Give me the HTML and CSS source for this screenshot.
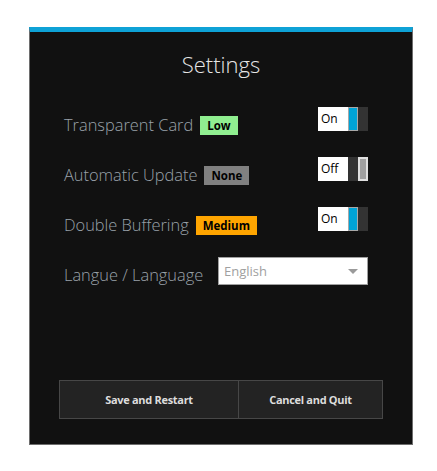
FILE: index.html
```html
<!DOCTYPE html>
<html>
<head>
<meta charset="utf-8">
<link rel="stylesheet" href="styles.css">
</head>
<body>
<div class="card">
  <h1 class="title">Settings</h1>
  <div class="settings">
    <div class="row">
      <div class="label">Transparent Card <span class="badge low">Low</span></div>
      <div class="toggle on"><span class="state">On</span><span class="thumb"></span><span class="rest"></span></div>
    </div>
    <div class="row">
      <div class="label">Automatic Update <span class="badge none">None</span></div>
      <div class="toggle off"><span class="state">Off</span><span class="rest"></span><span class="thumb"></span></div>
    </div>
    <div class="row">
      <div class="label">Double Buffering <span class="badge medium">Medium</span></div>
      <div class="toggle on"><span class="state">On</span><span class="thumb"></span><span class="rest"></span></div>
    </div>
    <div class="row">
      <div class="label">Langue / Language</div>
      <div class="combo"><span class="combo-text">English</span><svg class="arrow" width="10" height="5" viewBox="0 0 10 5"><path d="M0 0H10L5 5Z" fill="#9a9a9a"/></svg></div>
    </div>
  </div>
  <div class="actions">
    <button class="btn">Save and Restart</button>
    <button class="btn second">Cancel and Quit</button>
  </div>
</div>
</body>
</html>
```
FILE: styles.css
```css
body {
  margin: 0;
  background: #ffffff;
}
.card {
  box-sizing: border-box;
  width: 384px;
  height: 418px;
  margin: 27px 0 0 29px;
  background: #111111;
  border: 1px solid #6e6e6e;
  border-top: 5px solid #0ea2d6;
  display: flex;
  flex-direction: column;
  font-family: "Open Sans", "Noto Sans", sans-serif;
}
.title {
  margin: 16px 0 0;
  font-weight: 300;
  font-size: 22px;
  line-height: 32px;
  text-align: center;
  color: #e6e6e6;
}
.settings {
  margin-top: 20px;
  padding: 0 44px 0 34px;
}
.row {
  height: 50px;
  display: flex;
  justify-content: space-between;
  align-items: flex-start;
}
.label {
  margin-top: 14px;
  font-size: 16.4px;
  line-height: 22px;
  font-weight: 300;
  color: #9aa2aa;
  display: flex;
  align-items: center;
  gap: 7px;
  white-space: nowrap;
}
.badge {
  height: 19px;
  line-height: 19px;
  padding: 0 7px;
  font-size: 11.5px;
  font-weight: 700;
  color: #000;
}
.low { background: #90ee90; }
.none { background: #808080; }
.medium { background: #ffa500; }
.toggle {
  margin-top: 7px;
  display: flex;
  width: 50px;
  height: 24px;
}
.state {
  box-sizing: border-box;
  width: 30px;
  background: #ffffff;
  color: #000;
  font-size: 12px;
  line-height: 24px;
  padding-left: 3px;
}
.thumb {
  box-sizing: border-box;
  width: 10px;
  border: 1px solid #a8a8a8;
  background: #00a3d6;
}
.rest {
  width: 10px;
  background: #333333;
}
.off .thumb {
  background: #a0a0a0;
  border: 2px solid #e0e0e0;
}
.combo {
  margin-top: 7px;
  box-sizing: border-box;
  width: 150px;
  height: 28px;
  flex: none;
  background: #ffffff;
  border: 1px solid #a0a0a0;
  display: flex;
  align-items: center;
  justify-content: space-between;
  padding: 0 9px 0 5px;
  color: #a0a0a0;
  font-size: 13px;
}
.actions {
  margin-top: auto;
  margin-bottom: 25px;
  padding-left: 29px;
  display: grid;
  grid-template-columns: 180px 144px;
  height: 39px;
}
.btn {
  box-sizing: border-box;
  background: #232323;
  border: 1px solid #474747;
  color: #dddddd;
  font-family: "Open Sans", "Noto Sans", sans-serif;
  font-size: 11px;
  letter-spacing: -0.3px;
  font-weight: 700;
  margin: 0;
  padding: 0;
}
.second {
  border-left: none;
}
```
